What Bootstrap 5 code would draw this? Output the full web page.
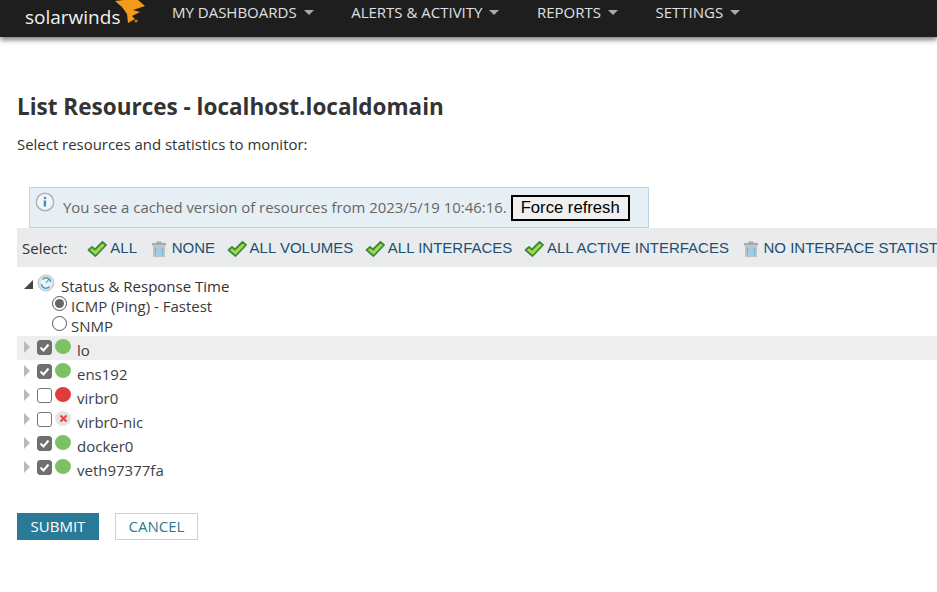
<!DOCTYPE html>
<html lang="en"><head><meta charset="utf-8"><title>List Resources</title>
<link href="https://cdn.jsdelivr.net/npm/bootstrap@5.3.0/dist/css/bootstrap.min.css" rel="stylesheet">
<style>
html,body{height:592px;overflow:hidden}
body{font-family:"Open Sans",sans-serif;font-size:15px;color:#333;background:#fff}
.topbar{height:37px;background:#1e1e1e;box-shadow:0 3px 5px rgba(0,0,0,.5);overflow:hidden;padding-left:25px}
.brand{width:122px;height:37px;position:relative;color:#f0f0f0;font-size:19px;line-height:1;padding-top:8px}
.brand svg{position:absolute;left:89px;top:0}
.topnav{margin-left:25px;gap:37.5px;height:25px}
.topnav a{color:#e0e0e0;font-size:15px;text-decoration:none;line-height:25px;display:flex;align-items:center;gap:7px}
.caret-d{width:0;height:0;border:5.5px solid transparent;border-top-color:#aaa;border-bottom:0}
.page-h{font-size:22.5px;font-weight:700;color:#333;margin:56px 0 0 17px;line-height:28px}
.lede{margin:13px 0 0 17px;line-height:20px;font-size:14.95px}
.infobox{margin:33px 0 0 29px;width:620px;height:41px;background:#e6eff4;border:1px solid #b7d5e3;padding-left:5px;color:#666;font-size:14.93px;gap:8px;white-space:nowrap}
.infobox svg{margin-top:4px;flex:none}
.forcebtn{font-family:"Liberation Sans",sans-serif;font-size:16.67px;color:#000;background:#f0f0f0;border:2px solid #000;height:26px;width:119px;padding:0;line-height:20px;margin-left:-4px;margin-top:7px}
.infotext{margin-top:9px;line-height:20px}
.selbar{height:39px;margin-left:17px;background:#e9ebed;padding-left:5px;white-space:nowrap;overflow:hidden;font-size:15px}
.selbar .lbl{margin-right:20px;color:#333;flex:none;padding-top:1px}
.selbar a{color:#204f73;text-decoration:none;flex:none;display:flex;align-items:center;gap:3px;margin-right:11.6px;padding-top:2px;font-family:"Liberation Sans",sans-serif;font-size:15px}
.tree{margin:7px 0 0 17px;font-size:15px;line-height:20px}
.treehead{height:22px;padding-left:7px;gap:4px}
.treehead .tri-o{width:0;height:0;border-right:9px solid #444;border-top:9px solid transparent;margin-top:6px}
.treehead .lab{margin-top:2px;margin-left:2px}
.radio-line{height:20px;padding-left:35px;gap:4px}
.radio-line .lab{color:#3a3a3a}
.rdo{width:15px;height:15px;border:1px solid #555;border-radius:50%;background:#fff;flex:none;position:relative}
.rdo.on::after{content:"";position:absolute;left:2px;top:2px;width:9px;height:9px;border-radius:50%;background:#666}
.ifrow{height:24px;padding-left:7px}
.ifrow.hl{background:#eee}
.tri{width:0;height:0;border-left:6px solid #b9b9b9;border-top:6px solid transparent;border-bottom:6px solid transparent;margin-top:5px;flex:none}
.chk{width:15px;height:15px;border-radius:3px;border:1px solid #777;margin:4px 0 0 7px;flex:none;background:#fff;display:flex;align-items:center;justify-content:center}
.chk.on{background:#6f6f6f;border-color:#6f6f6f}
.stat{width:16px;height:15px;border-radius:50%;margin:3px 0 0 3px;flex:none;display:flex;align-items:center;justify-content:center}
.s-up{background:#7cc264}.s-down{background:#e23b3b}.s-off{background:#e4e4e4}
.ifrow .nm{margin:4px 0 0 6px;line-height:20px;color:#3b4048}
.actions{margin:33px 0 0 17px;gap:16px}
.sbtn{height:27px;width:82px;background:#297a96;color:#fff;border:0;border-radius:0;padding:0;font-size:15px;line-height:27px}
.cbtn{height:27px;width:83px;background:#fff;color:#297a96;border:1px solid #d0d0d0;border-radius:0;padding:0;font-size:15px;line-height:25px}
</style></head><body>
<svg width="0" height="0" class="d-block position-absolute"><defs>
<symbol id="ok" viewBox="0 0 20 16"><path d="M1.500 9L5 6l3 2.500L15.500 1 19 4 8.500 15z" fill="#a2d94a" stroke="#3b8a3c" stroke-width="1.800" stroke-linejoin="round"/></symbol>
<symbol id="bin" viewBox="0 0 20 16"><path d="M7.500 2V.5h5V2h4.500v2.500H3V2z" fill="#a9a9a9"/><path d="M4 5h12v11H4z" fill="#c2c2c2"/><path d="M6 7h8v7H6z" fill="#6fb2d2"/><path d="M8 7v7M10 7v7M12 7v7" stroke="#e6f2f8" stroke-width=".8"/></symbol>
</defs></svg>
<header class="topbar d-flex">
 <div class="brand">solarwinds
  <svg width="32" height="25" viewBox="0 0 32 25"><path d="M1 1L10 0H24L31 6 19 10l7 2-8 4 3 3-7 4-1-9-5-7z" fill="#f59b1c"/><circle cx="22" cy="21" r="1.600" fill="#c47a12"/></svg>
 </div>
 <nav class="topnav d-flex">
  <a href="#">MY DASHBOARDS <span class="caret-d"></span></a>
  <a href="#">ALERTS &amp; ACTIVITY <span class="caret-d"></span></a>
  <a href="#">REPORTS <span class="caret-d"></span></a>
  <a href="#">SETTINGS <span class="caret-d"></span></a>
 </nav>
</header>
<h1 class="page-h">List Resources - localhost.localdomain</h1>
<p class="lede mb-0">Select resources and statistics to monitor:</p>
<div class="infobox d-flex">
 <svg width="20" height="20" viewBox="0 0 20 20"><circle cx="10" cy="10" r="8.700" fill="#f3f6f8" stroke="#a9b4ba" stroke-width="1.500"/><circle cx="10" cy="6" r="1.300" fill="#3c93bb"/><path d="M8.700 8.500h2.400v6H8.700z" fill="#3c93bb"/></svg>
 <span class="infotext">You see a cached version of resources from 2023/5/19 10:46:16.</span>
 <button type="button" class="forcebtn">Force refresh</button>
</div>
<div class="selbar d-flex align-items-center"><span class="lbl">Select:</span><a href="#"><svg width="20" height="16"><use href="#ok"/></svg>ALL</a><a href="#"><svg width="20" height="16"><use href="#bin"/></svg>NONE</a><a href="#"><svg width="20" height="16"><use href="#ok"/></svg>ALL VOLUMES</a><a href="#"><svg width="20" height="16"><use href="#ok"/></svg>ALL INTERFACES</a><a href="#"><svg width="20" height="16"><use href="#ok"/></svg>ALL ACTIVE INTERFACES</a><a href="#"><svg width="20" height="16"><use href="#bin"/></svg>NO INTERFACE STATISTICS</a></div>
<div class="tree">
 <div class="treehead d-flex">
  <span class="tri-o"></span>
  <svg width="18" height="18" viewBox="0 0 18 18"><circle cx="9" cy="9" r="8" fill="#dde1e4" stroke="#c4c4c4"/><circle cx="9" cy="9" r="5.500" fill="#f0f3f5"/><path d="M4.500 10a4.500 4.500 0 0 0 8 2.500M13.500 8a4.500 4.500 0 0 0-8-2.500" fill="none" stroke="#4aa0c8" stroke-width="1.500"/><path d="M9 9l3-4" stroke="#4aa0c8" stroke-width="1.200"/></svg>
  <span class="lab">Status &amp; Response Time</span>
 </div>
 <div class="radio-line d-flex"><span class="rdo on"></span><span class="lab">ICMP (Ping) - Fastest</span></div>
 <div class="radio-line d-flex"><span class="rdo"></span><span class="lab">SNMP</span></div>
 <div class="ifrow hl d-flex"><span class="tri"></span><span class="chk on"><svg width="11" height="9" viewBox="0 0 11 9"><path d="M1.500 4.500l3 3 5-6" fill="none" stroke="#fff" stroke-width="2"/></svg></span><span class="stat s-up"></span><span class="nm">lo</span></div>
 <div class="ifrow d-flex"><span class="tri"></span><span class="chk on"><svg width="11" height="9" viewBox="0 0 11 9"><path d="M1.500 4.500l3 3 5-6" fill="none" stroke="#fff" stroke-width="2"/></svg></span><span class="stat s-up"></span><span class="nm">ens192</span></div>
 <div class="ifrow d-flex"><span class="tri"></span><span class="chk"></span><span class="stat s-down"></span><span class="nm">virbr0</span></div>
 <div class="ifrow d-flex"><span class="tri"></span><span class="chk"></span><span class="stat s-off"><svg width="9" height="9" viewBox="0 0 9 9"><path d="M1.500 1.500l6 6M7.500 1.500l-6 6" stroke="#e0454f" stroke-width="2.200"/></svg></span><span class="nm">virbr0-nic</span></div>
 <div class="ifrow d-flex"><span class="tri"></span><span class="chk on"><svg width="11" height="9" viewBox="0 0 11 9"><path d="M1.500 4.500l3 3 5-6" fill="none" stroke="#fff" stroke-width="2"/></svg></span><span class="stat s-up"></span><span class="nm">docker0</span></div>
 <div class="ifrow d-flex"><span class="tri"></span><span class="chk on"><svg width="11" height="9" viewBox="0 0 11 9"><path d="M1.500 4.500l3 3 5-6" fill="none" stroke="#fff" stroke-width="2"/></svg></span><span class="stat s-up"></span><span class="nm">veth97377fa</span></div>
</div>
<div class="actions d-flex">
 <button type="button" class="btn sbtn">SUBMIT</button>
 <button type="button" class="btn cbtn">CANCEL</button>
</div>
</body></html>
